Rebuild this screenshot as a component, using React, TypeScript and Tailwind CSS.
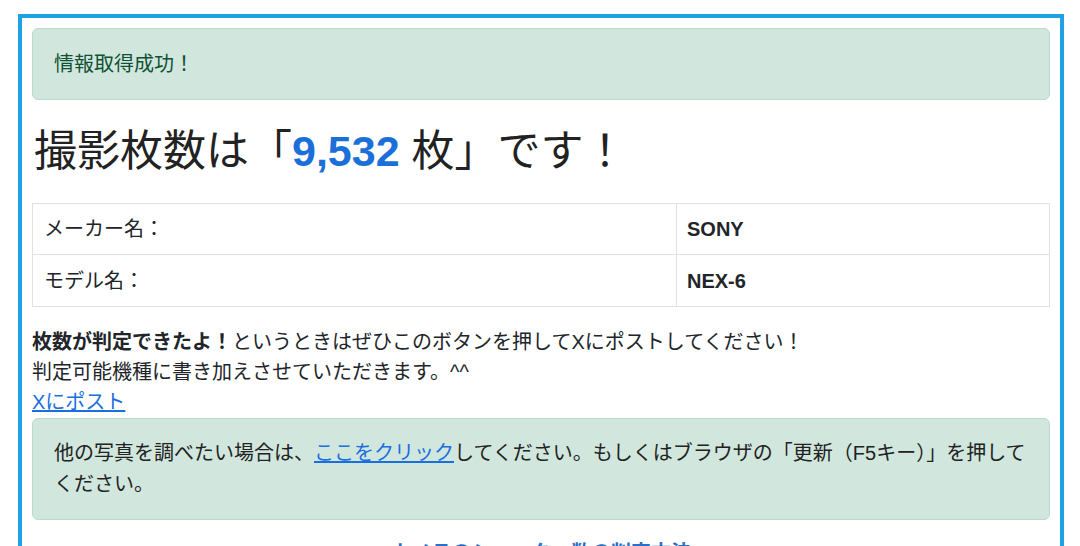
import React from "react";

const font = { fontFamily: '"Liberation Sans", "Noto Sans CJK JP", sans-serif' };

export default function App() {
  return (
    <div className="w-[1080px] h-[546px] overflow-hidden bg-white pt-[14px] pl-[18px]" style={font}>
      <div className="w-[1046px] border-4 border-[#1fa2e3] px-[10px] pt-[10px] pb-10 text-[#212529]">
        <div className="h-[72px] rounded-[6px] border border-[#badbcc] bg-[#d1e7dd] px-[21px] flex items-center text-[#0f5132] text-[20px]">
          情報取得成功！
        </div>
        <h1 className="mt-[20px] h-[62px] pl-[2px] text-[43px] leading-[62px] font-normal text-[#222]">
          撮影枚数は「<span className="font-bold text-[#1a6fd8]">9,532</span> 枚」です！
        </h1>
        <table className="mt-[21px] w-full border-collapse text-[20px]">
          <tbody>
            <tr className="h-[51px]">
              <td className="border border-[#dee2e6] px-[11px] w-[644px]">メーカー名：</td>
              <td className="border border-[#dee2e6] px-[10px] font-bold">SONY</td>
            </tr>
            <tr className="h-[52px]">
              <td className="border border-[#dee2e6] px-[11px]">モデル名：</td>
              <td className="border border-[#dee2e6] px-[10px] font-bold">NEX-6</td>
            </tr>
          </tbody>
        </table>
        <p className="mt-[20px] text-[20px] leading-[30px]">
          <b>枚数が判定できたよ！</b>というときはぜひこのボタンを押してXにポストしてください！
          <br />
          判定可能機種に書き加えさせていただきます。^^
          <br />
          <a href="#" className="text-[#1a6fe0] underline">Xにポスト</a>
        </p>
        <div className="mt-[1px] rounded-[6px] border border-[#badbcc] bg-[#d1e7dd] px-[21px] pt-[19px] pb-[19px] text-[20px] leading-[31px] text-[#222]">
          他の写真を調べたい場合は、<a href="#" className="text-[#1a6fe0] underline">ここをクリック</a>してください。もしくはブラウザの「更新（F5キー）」を押してください。
        </div>
        <div className="mt-[18px] text-center text-[20px] leading-[30px] font-bold text-[#2a6fc9]">
          カメラのシャッター数の判定方法
        </div>
      </div>
    </div>
  );
}
